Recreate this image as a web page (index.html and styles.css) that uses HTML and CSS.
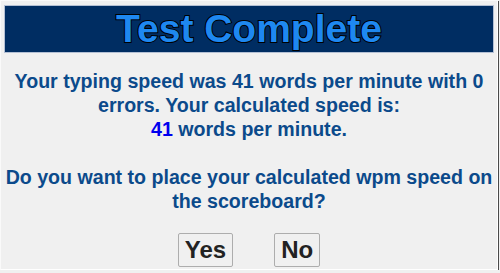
FILE: index.html
```html
<!DOCTYPE html>
<html lang="en">
<head>
    <meta charset="UTF-8">
    <title>Test Complete</title>
    <link rel="stylesheet" href="styles.css">
</head>
<body>
    <div class="dialog">
        <div class="header">
            <h1>Test Complete</h1>
        </div>

        <div class="message">
            <p>Your typing speed was 41 words per minute with 0 errors. Your calculated speed is:<br>
                <span class="wpm">41</span> words per minute.</p>
            <p>Do you want to place your calculated wpm speed on the scoreboard?</p>
        </div>

        <div class="buttons">
            <button id="yesBtn">Yes</button>
            <button id="noBtn">No</button>
        </div>
    </div>
</body>
</html>
```

FILE: styles.css
```css
body {
    margin: 0;
    background: #f0f0f0;
    font-family: "Liberation Sans", Arial, sans-serif;
}

.dialog {
    width: 496px;
    height: 268px;
    border-top: 1px solid #fafafa;
    border-left: 1px solid #fafafa;
    border-right: 1px solid #ffffff;
    border-bottom: 1px solid #ffffff;
    box-shadow: 1px 1px 0 #4a4a4a;
    display: flex;
    flex-direction: column;
}

.header {
    margin: 4px 3px 0 3px;
    height: 46px;
    background: #002d62;
    border: 1px solid #b4c0d4;
    text-align: center;
}

.header h1 {
    margin: 0;
    font-size: 39px;
    line-height: 46px;
    font-weight: bold;
    color: #1e88f0;
    -webkit-text-stroke: 2px #000;
    paint-order: stroke fill;
}

.message {
    padding: 16px 0 0 0;
    text-align: center;
    color: #0b4a8b;
    font-size: 19.6px;
    font-weight: bold;
    line-height: 24px;
}

.message p {
    margin: 0 0 24px 0;
}

.message p:last-child {
    margin-bottom: 0;
}

.wpm {
    color: #0000ee;
}

.buttons {
    display: flex;
    justify-content: center;
    gap: 41px;
    margin-top: auto;
    margin-bottom: 2px;
}

button {
    font-family: "Liberation Sans", Arial, sans-serif;
    font-size: 24px;
    font-weight: bold;
    color: #222;
    background: #f0f0f0;
    border: 1px solid #adadad;
    border-radius: 2px;
    padding: 0 6px;
    height: 34px;
}
```
